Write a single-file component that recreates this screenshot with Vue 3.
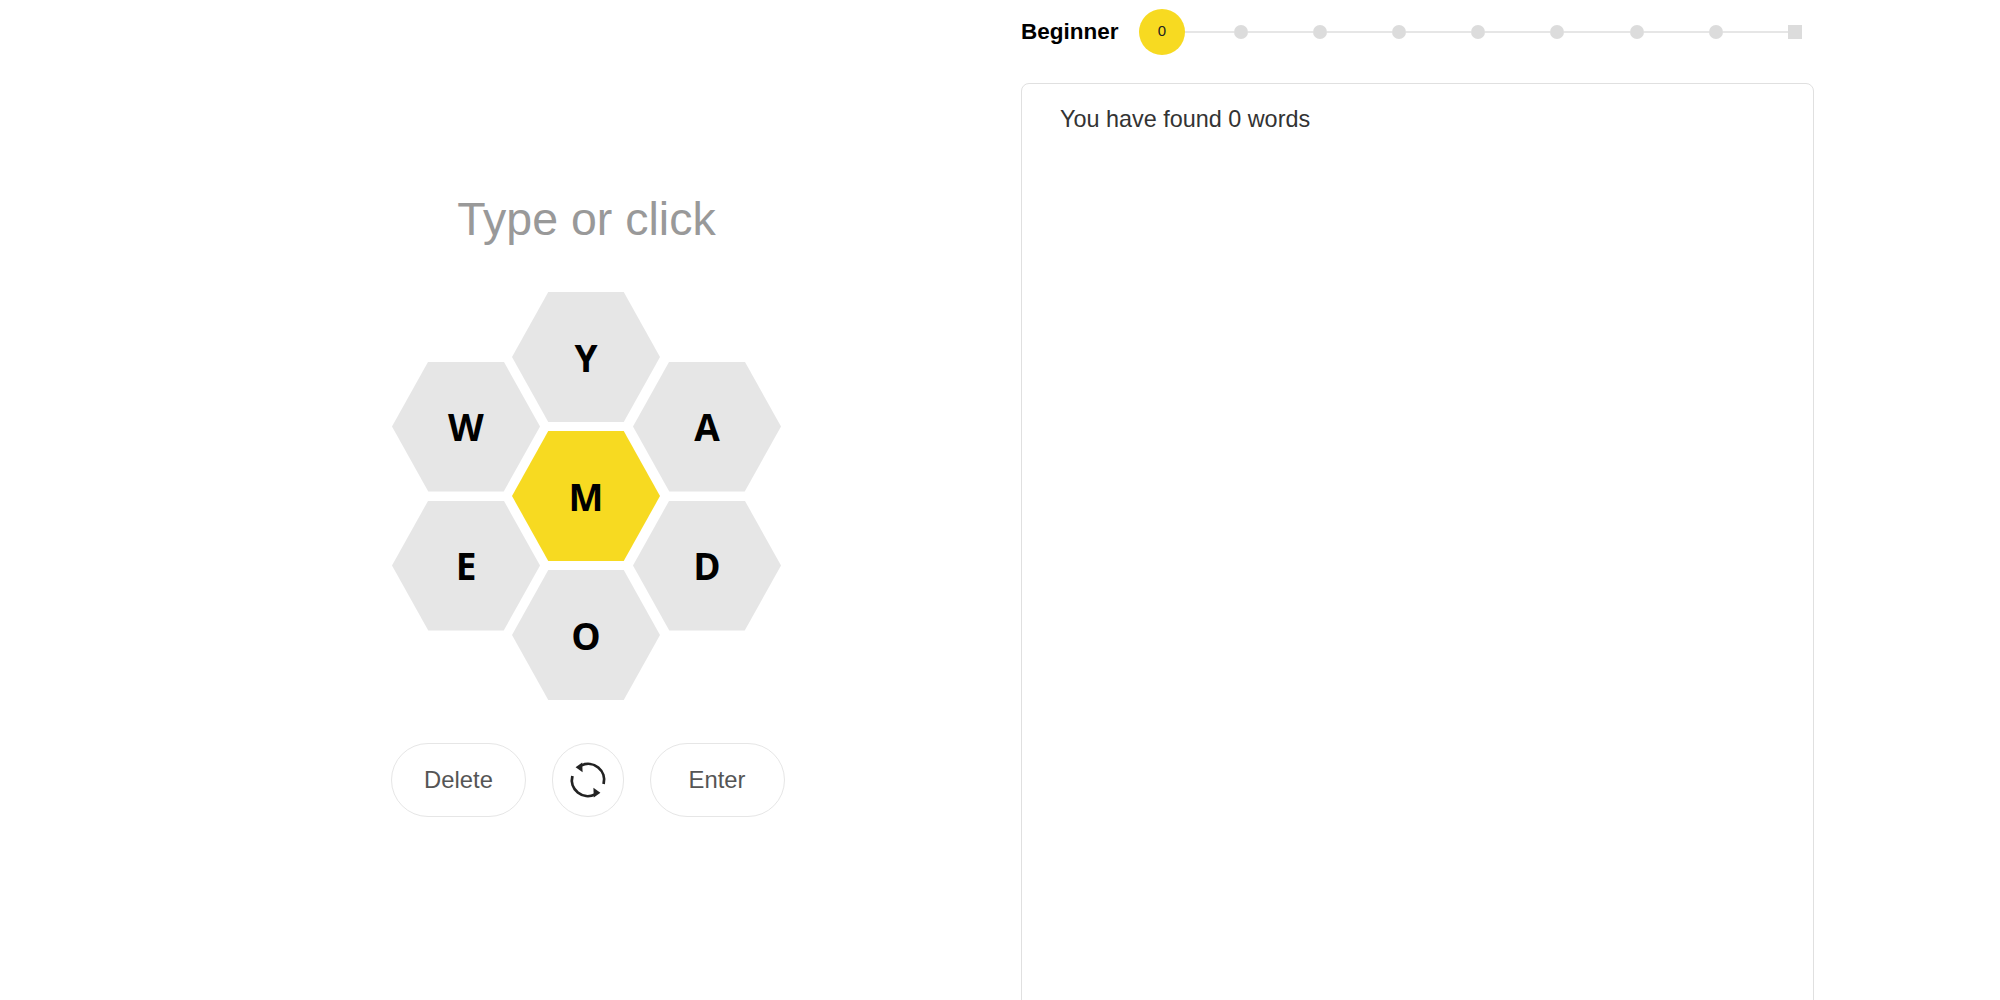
<script setup>
const leftColumn = ['W', 'E']
const middleColumn = [
  { letter: 'Y', center: false },
  { letter: 'M', center: true },
  { letter: 'O', center: false }
]
const rightColumn = ['A', 'D']

// seven small steps after the current rank
const steps = 7
</script>

<template>
  <main class="page">
    <section class="game">
      <h1 class="prompt">Type or click</h1>

      <div class="hive">
        <div class="column">
          <div v-for="l in leftColumn" :key="l" class="cell">{{ l }}</div>
        </div>
        <div class="column middle">
          <div
            v-for="c in middleColumn"
            :key="c.letter"
            :class="['cell', { center: c.center }]"
          >
            {{ c.letter }}
          </div>
        </div>
        <div class="column">
          <div v-for="l in rightColumn" :key="l" class="cell">{{ l }}</div>
        </div>
      </div>

      <div class="controls">
        <button class="pill">Delete</button>
        <button class="round" aria-label="Shuffle">
          <svg width="40" height="40" viewBox="0 0 40 40" fill="none">
            <path d="M13 5.6A16 16 0 0 1 35.6 24" stroke="#222" stroke-width="2.8" />
            <path d="M27 34.4A16 16 0 0 1 4.4 16" stroke="#222" stroke-width="2.8" />
            <path d="M7.6 7.2 14.2 2.6 14.6 12.2Z" fill="#222" />
            <path d="M32.4 32.8 25.8 37.4 25.4 27.8Z" fill="#222" />
          </svg>
        </button>
        <button class="pill">Enter</button>
      </div>
    </section>

    <section class="progress-side">
      <div class="rank">
        <h2 class="rank-name">Beginner</h2>
        <div class="track">
          <span class="score">0</span>
          <template v-for="n in steps" :key="n">
            <span :class="['line', { first: n === 1 }]"></span>
            <span class="dot"></span>
          </template>
          <span class="line"></span>
          <span class="dot last"></span>
        </div>
      </div>

      <div class="words">
        <p class="found">You have found 0 words</p>
      </div>
    </section>
  </main>
</template>

<style scoped>
.page {
  display: flex;
  height: 1000px;
  overflow: hidden;
  background: #fff;
  color: #000;
}

.game {
  width: 1021px;
  flex-shrink: 0;
  padding: 192px 0 0 392px;
  box-sizing: border-box;
}

.prompt {
  width: 389px;
  margin: 0;
  font-family: "Liberation Sans", Arial, sans-serif;
  font-size: 46.5px;
  font-weight: 400;
  line-height: 55px;
  text-align: center;
  color: #999;
}

.hive {
  display: flex;
  align-items: center;
  margin-top: 45px;
  width: 390px;
}

.column {
  display: flex;
  flex-direction: column;
  gap: 9px;
}

.middle {
  margin: 0 -27px 0 -28px;
}

.cell {
  display: flex;
  align-items: center;
  justify-content: center;
  width: 148px;
  height: 130px;
  background: #e6e6e6;
  clip-path: polygon(24.5% 0, 75.5% 0, 100% 50%, 75.5% 100%, 24.5% 100%, 0 50%);
  font-family: "Open Sans", "Noto Sans", sans-serif;
  font-size: 37px;
  font-weight: 700;
  color: #000;
}

.cell.center {
  background: #f7da21;
}

.controls {
  display: flex;
  align-items: center;
  gap: 25.5px;
  margin-top: 43px;
  margin-left: -1px;
}

.pill,
.round {
  height: 74px;
  padding: 0;
  background: #fff;
  border: 1.5px solid #e6e6e6;
  border-radius: 37px;
  box-sizing: border-box;
  font-family: "Liberation Sans", Arial, sans-serif;
  font-size: 23.8px;
  color: #555;
}

.pill {
  width: 135px;
}

.round {
  display: flex;
  align-items: center;
  justify-content: center;
  width: 72.5px;
}

.progress-side {
  flex: 1;
  min-width: 0;
  display: flex;
  flex-direction: column;
}

.rank {
  display: flex;
  align-items: center;
  gap: 22px;
  height: 46px;
  margin-top: 9px;
  flex-shrink: 0;
}

.rank-name {
  margin: 0;
  width: 96px;
  font-family: "Liberation Sans", Arial, sans-serif;
  font-size: 22.5px;
  font-weight: 700;
  white-space: nowrap;
  color: #000;
}

.track {
  display: flex;
  align-items: center;
}

.score {
  display: flex;
  align-items: center;
  justify-content: center;
  width: 46px;
  height: 46px;
  border-radius: 50%;
  background: #f7da21;
  font-family: "Liberation Sans", Arial, sans-serif;
  font-size: 15px;
  line-height: 44px;
  padding-bottom: 2px;
  box-sizing: border-box;
  color: #222;
}

.line {
  width: 65.1px;
  height: 2px;
  background: #e6e6e6;
}

.line.first {
  width: 49.1px;
}

.dot {
  width: 14px;
  height: 14px;
  border-radius: 50%;
  background: #dcdcdc;
}

.dot.last {
  border-radius: 0;
}

.words {
  flex-shrink: 0;
  width: 793px;
  height: 960px;
  margin-top: 28px;
  padding: 20px 38px;
  box-sizing: border-box;
  border: 1.5px solid #e0e0e0;
  border-radius: 8px;
}

.found {
  margin: 0;
  font-family: "Liberation Sans", Arial, sans-serif;
  font-size: 23.4px;
  line-height: 30px;
  color: #333;
}
</style>
